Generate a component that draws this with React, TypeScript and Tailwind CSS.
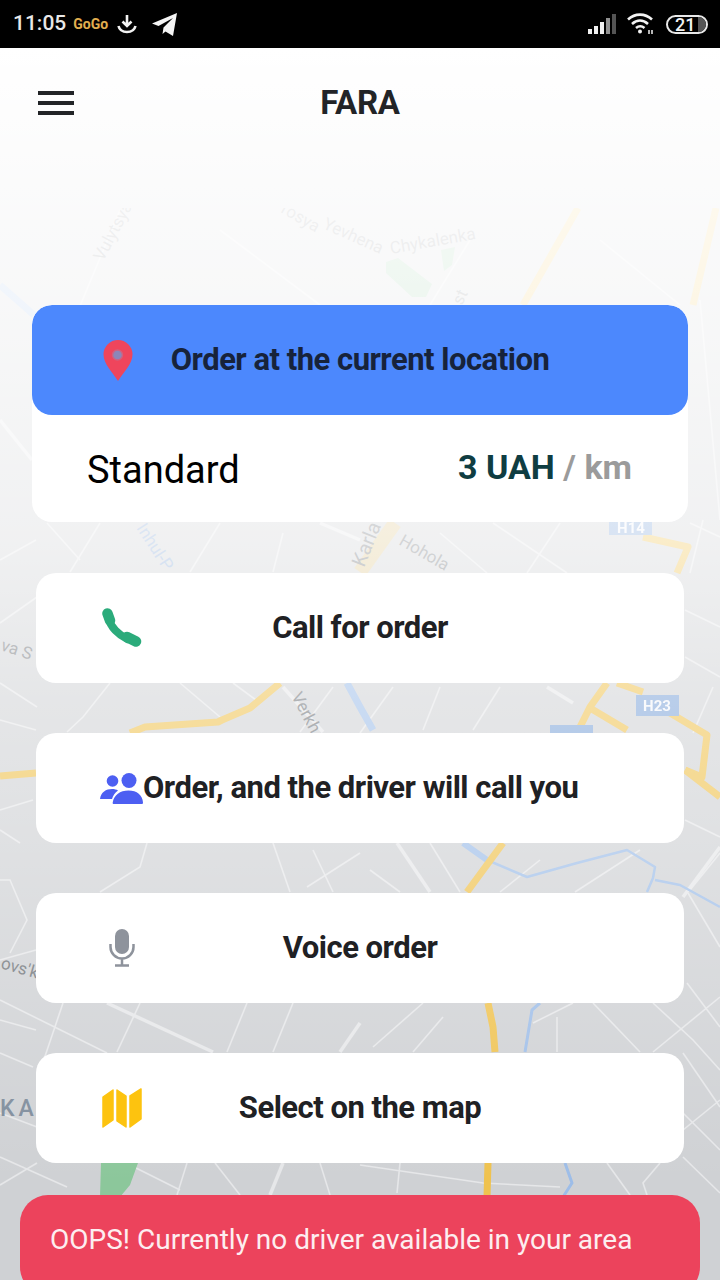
const ROADS: [string, number][] = [
  // lower left
  ['107,1003 213,1052', 4], ['63,1003 37,1080', 2], ['0,1000 107,1053', 2], ['140,1003 117,1052', 2],
  ['247,1003 227,1052', 2], ['293,1003 273,1052', 2], ['360,1023 340,1052', 4], ['0,1053 33,1067', 2],
  ['0,1113 37,1127', 2], ['0,1157 67,1187', 2], ['147,843 140,867 100,892', 2], ['273,843 290,892', 2],
  ['313,850 333,892', 2], ['360,853 307,887', 2], ['0,880 10,880 27,920 10,953', 2], ['283,1163 270,1195', 4],
  ['187,1163 177,1195', 2], ['37,1163 0,1185', 2], ['0,960 36,950', 2], ['36,1030 0,1020', 2],
  ['215,1163 240,1195', 2], ['320,1163 330,1195', 2], ['130,1165 180,1190', 2],
  // lower right
  ['397,843 430,892', 4], ['430,843 460,892', 2], ['370,870 400,892', 2], ['683,897 720,847', 4],
  ['688,893 720,947', 2], ['687,983 720,1027', 2], ['720,997 653,1052', 2], ['593,1003 640,1052', 2],
  ['653,1003 693,1040 720,1070', 2], ['573,1003 533,1023', 2], ['423,1003 373,1047', 2], ['443,1017 413,1052', 2],
  ['557,1017 557,1052', 2], ['683,1053 720,1107', 2], ['720,1100 683,1130', 2], ['683,1113 720,1150', 2],
  ['683,1157 720,1193', 2], ['660,1163 643,1183 647,1195', 2], ['360,1165 483,1183 560,1187', 2], ['400,1163 397,1193', 2],
  ['607,1163 630,1195', 2], ['500,892 540,860', 2], ['575,892 640,850', 2],
  // middle left
  ['47,523 80,560', 2], ['0,560 36,540', 2], ['0,623 37,597', 2], ['283,533 273,572', 2], ['320,523 360,540', 4],
  ['110,683 83,717 67,732', 2], ['180,683 220,717', 2], ['233,683 260,703', 2], ['283,687 323,732', 4],
  ['0,683 37,707', 2], ['0,720 36,730', 2], ['0,810 33,800', 2], ['20,843 0,830', 2], ['333,687 300,732', 2],
  ['100,523 70,572', 2], ['220,523 190,572', 2],
  // middle right
  ['393,687 360,733', 2], ['440,687 423,730', 2], ['500,687 473,730', 2], ['547,687 573,703', 4], ['560,523 527,573', 2],
  ['493,523 567,573', 2], ['440,533 487,573', 2], ['690,523 720,537', 2], ['703,520 690,573', 2], ['685,610 720,627', 2],
  ['685,657 720,677', 2], ['713,687 693,733', 2], ['685,820 720,837', 2], ['720,853 690,890', 2], ['700,300 720,520', 2],
  // faded top
  ['0,420 32,460', 3], ['120,210 70,330', 2], ['470,240 430,305', 2], ['600,240 680,305', 2], ['220,230 320,305', 2],
];

function MapBackdrop() {
  return (
    <svg className="absolute left-0 top-[48px] h-[1232px] w-[720px]" viewBox="0 48 720 1232" fill="none">
      <defs>
        <linearGradient id="fade" x1="0" y1="48" x2="0" y2="1280" gradientUnits="userSpaceOnUse">
          <stop offset="0" stopColor="#fff" stopOpacity="1" />
          <stop offset="0.13" stopColor="#fff" stopOpacity="0.9" />
          <stop offset="0.2" stopColor="#fff" stopOpacity="0.86" />
          <stop offset="0.4" stopColor="#fff" stopOpacity="0.7" />
          <stop offset="0.53" stopColor="#fff" stopOpacity="0.46" />
          <stop offset="0.66" stopColor="#fff" stopOpacity="0.33" />
          <stop offset="0.92" stopColor="#fff" stopOpacity="0" />
        </linearGradient>
        <clipPath id="mapArea">
          <rect x="0" y="208" width="720" height="1072" />
        </clipPath>
        <filter id="soft">
          <feGaussianBlur stdDeviation="0.6" />
        </filter>
      </defs>
      <rect x="0" y="48" width="720" height="1232" fill="#cfd1d4" />
      <g clipPath="url(#mapArea)">
        <g filter="url(#soft)">
          {ROADS.map(([points, width]) => (
            <polyline key={points} points={points} stroke="#e6e7e9" strokeWidth={width === 2 ? 1.6 : 3.5} />
          ))}
          {/* parks */}
          <path d="M101 1163h37l-8 22-10 12-20 0z" fill="#8cc79b" />
          <path d="M386 262l12-4 34 26-6 13-14 0-26-24z" fill="#8cc79b" />
          <path d="M441 250l14-3-3 18-8 6z" fill="#8cc79b" />
          {/* water */}
          <g stroke="#9dbde8" strokeLinejoin="round">
            <polyline points="0,285 34,315" strokeWidth="7" />
            <polyline points="347,683 360,707 373,730" strokeWidth="7" />
            <polyline points="463,843 487,860" strokeWidth="6" />
            <polyline points="487,860 527,877 577,863 627,850 655,867 653,878 647,892" strokeWidth="2.500" />
            <polyline points="655,880 680,885 720,907" strokeWidth="2.500" />
            <polyline points="540,1003 532,1010 525,1052" strokeWidth="3" />
            <polyline points="565,1163 572,1183 563,1197" strokeWidth="3" />
          </g>
          {/* highways */}
          <g stroke="#efc24f" strokeWidth="7" strokeLinejoin="round">
            <polyline points="0,776 36,773" />
            <polyline points="130,733 145,727 218,722 222,720 250,708 280,683" />
            <polyline points="578,208 523,305" />
            <polyline points="716,208 693,305" />
            <polyline points="643,537 688,547 677,573" />
            <polyline points="607,683 590,707 577,733" />
            <polyline points="617,683 643,692" />
            <polyline points="590,708 627,730" />
            <polyline points="670,713 707,735 702,777 685,770" />
            <polyline points="685,770 720,797" />
            <polyline points="503,843 467,892" />
            <polyline points="488,1003 493,1027 495,1052" />
            <polyline points="488,1163 487,1197" />
            <polyline points="360,572 395,523" strokeWidth="14" opacity="0.5" />
          </g>
          {/* shields */}
          <rect x="609" y="522" width="43" height="13" fill="#7ea4d8" />
          <rect x="636" y="695" width="43" height="21" fill="#7ea4d8" />
          <rect x="550" y="725" width="43" height="10" fill="#7ea4d8" />
          <g fontFamily="Roboto, sans-serif" fontWeight="700">
            <text x="657" y="711" fontSize="15" fill="#f4f6fa" textAnchor="middle">H23</text>
            <text x="631" y="533" fontSize="15" fill="#f4f6fa" textAnchor="middle">H14</text>
          </g>
        </g>
        {/* street names */}
        <g fontFamily="Roboto, sans-serif" fontSize="17" fill="#6f7479">
          <text transform="translate(103 262) rotate(-62)">Vulytsya</text>
          <text transform="translate(280 212) rotate(30)">rosya</text>
          <text transform="translate(322 228) rotate(24)">Yevhena</text>
          <text transform="translate(391 254) rotate(-10)">Chykalenka</text>
          <text transform="translate(462 306) rotate(-65)">st</text>
          <text transform="translate(364 568) rotate(-68)" fontSize="20">Karla</text>
          <text transform="translate(398 544) rotate(30)">Hohola</text>
          <text transform="translate(0 650) rotate(18)">va S</text>
          <text transform="translate(291 696) rotate(62)">Verkh</text>
          <text transform="translate(0 968) rotate(16)">ovs'k</text>
          <text x="0" y="1116" fontSize="23" fontWeight="500" letterSpacing="4" fill="#7c8a9a">KA</text>
          <text transform="translate(136 528) rotate(57)" fill="#88a9d8">Inhul-P</text>
        </g>
      </g>
      <rect x="0" y="48" width="720" height="1232" fill="url(#fade)" />
    </svg>
  );
}

function PinIcon() {
  return (
    <svg width="30" height="41" viewBox="0 0 30 41">
      <path d="M15 41C10 33 .5 24 .5 14.5a14.5 14.5 0 0 1 29 0C29.500 24 20 33 15 41z" fill="#ef455c" />
      <circle cx="14.500" cy="15" r="5" fill="#8d86b8" stroke="#d0617f" strokeWidth="1.500" />
    </svg>
  );
}

function PhoneIcon() {
  return (
    <svg width="40" height="40" viewBox="0 0 40 40" fill="none" stroke="#2bab7b" strokeLinecap="round">
      <path d="M6.500 10c2 9 10 17 19 21" strokeWidth="8" />
      <path d="M5.500 5.500l2.500 7" strokeWidth="10.500" />
      <path d="M25 29l9 4.500" strokeWidth="10.500" />
    </svg>
  );
}

function PeopleIcon() {
  return (
    <svg width="43" height="31" viewBox="0 0 43 31" fill="#4d5ff2">
      <circle cx="12.500" cy="8" r="5.800" />
      <circle cx="29" cy="7.500" r="7.500" />
      <path d="M0 26c1-7 6-10 12-10 2.500 0 4.500.5 6 1.500-3 2-5 5-6 8.500z" />
      <path d="M14 31c-1 0-1.500-.5-1.300-1.500C14 22 20 17.500 28.500 17.500S42.500 22 43 29.500c0 1-.5 1.500-1.500 1.500z" />
    </svg>
  );
}

function MicIcon() {
  return (
    <svg width="26" height="38" viewBox="0 0 26 38" fill="none">
      <rect x="6" y="0" width="14" height="25" rx="7" fill="#8e939c" />
      <path d="M1.500 15v3a11.500 11.500 0 0 0 23 0v-3M13 29.500V36M6 36.500h14" stroke="#8e939c" strokeWidth="2.500" />
    </svg>
  );
}

function MapIcon() {
  return (
    <svg width="40" height="40" viewBox="0 0 40 40" fill="#fdc30f" stroke="#fdc30f" strokeWidth="1.500" strokeLinejoin="round">
      <path d="M1 9l10-7v30l-10 7z" />
      <path d="M15 2l9 6v31l-9-6z" />
      <path d="M28 8l11-7v30l-11 8z" />
    </svg>
  );
}

function OptionRow({ icon, label }: { icon: React.ReactNode; label: string }) {
  return (
    <div className="grid h-[110px] grid-cols-[1fr_auto_1fr] items-center rounded-[20px] bg-white mx-1">
      <div className="pl-[64px]">
        <div className="flex w-[43px] items-center justify-center">{icon}</div>
      </div>
      <span className="text-[31px] font-bold tracking-[-0.5px] text-[#1f2124]">{label}</span>
      <div />
    </div>
  );
}

export default function App() {
  return (
    <div className="relative h-[1280px] w-[720px] overflow-hidden bg-white font-['Roboto',sans-serif]">
      <MapBackdrop />

      {/* status bar */}
      <div className="relative flex h-12 items-center justify-between bg-black pl-[13px] pr-3">
        <div className="flex items-center">
          <span className="text-[21px] font-medium text-[#e8e8e8]">11:05</span>
          <span className="ml-[7px] text-[14px] font-bold text-[#e2ae4f]">GoGo</span>
          <svg className="ml-[9px]" width="20" height="20" viewBox="0 0 20 20" fill="none" stroke="#f2f2f2" strokeWidth="2.600">
            <path d="M10 1v10M5.500 7.500L10 12l4.500-4.500" />
            <path d="M1.500 12c1 4 4.500 6 8.500 6s7.500-2 8.500-6" />
          </svg>
          <svg className="ml-[15px]" width="25" height="24" viewBox="0 0 25 24" fill="#f5f5f5">
            <path d="M25 1L21 24l-7.500-4.500-3 2.500 1-6.500L21 6 6.500 14 0 11.500z" />
          </svg>
        </div>
        <div className="flex items-center">
          <svg width="28" height="22" viewBox="0 0 28 22" fill="#f0f0f0">
            <rect x="0" y="16" width="4" height="5" />
            <rect x="6" y="13" width="4" height="8" />
            <rect x="12" y="9" width="4" height="12" />
            <rect x="18" y="5" width="4" height="16" opacity="0.6" />
            <rect x="24" y="1" width="4" height="20" opacity="0.35" />
          </svg>
          <svg className="ml-[11px]" width="28" height="24" viewBox="0 0 28 24" fill="none" stroke="#f2f2f2" strokeWidth="2.600">
            <path d="M1 7.500C8 1 18 1 25 7.500M5 12c5-4.500 11-4.500 16 0M9 16c3-2.500 5.500-2.500 8.500 0" />
            <circle cx="13" cy="19.500" r="2" fill="#f2f2f2" stroke="none" />
            <path d="M22 22v-4M25 22v-4" strokeWidth="1.500" />
          </svg>
          <div className="ml-[11px] flex h-[19px] w-[42px] items-center overflow-hidden rounded-full border-2 border-[#e8e8e8]">
            <span className="pl-[7px] pr-[3px] text-[18px] font-medium leading-[15px] text-[#f2f2f2]">21</span>
            <span className="h-full flex-1 bg-[#555]" />
          </div>
        </div>
      </div>

      {/* header */}
      <div className="relative grid h-[110px] grid-cols-[1fr_auto_1fr] items-center">
        <div className="flex flex-col gap-[6px] pl-[38px]">
          <span className="h-1 w-9 bg-[#222427]" />
          <span className="h-1 w-9 bg-[#222427]" />
          <span className="h-1 w-9 bg-[#222427]" />
        </div>
        <h1 className="text-[33px] font-bold tracking-[-0.3px] text-[#222427]">FARA</h1>
        <div />
      </div>

      <div className="relative mt-[147px] flex flex-col px-8">
        {/* current location card */}
        <div className="overflow-hidden rounded-[20px] bg-white">
          <div className="grid h-[110px] grid-cols-[1fr_auto_1fr] items-center rounded-[20px] bg-[#4c88fd]">
            <div className="pl-[71px]">
              <PinIcon />
            </div>
            <span className="text-[31px] font-bold tracking-[-0.5px] text-[#17233b]">Order at the current location</span>
            <div />
          </div>
          <div className="flex h-[107px] items-center justify-between pl-[55px] pr-14">
            <span className="pt-1 text-[38px] text-black">Standard</span>
            <span className="pb-[2px] text-[34px] font-bold text-[#0f3d42]">
              3 UAH <span className="text-[#9b9b9b]">/ km</span>
            </span>
          </div>
        </div>

        <div className="mt-[51px] flex flex-col gap-[50px]">
          <OptionRow icon={<PhoneIcon />} label="Call for order" />
          <OptionRow icon={<PeopleIcon />} label="Order, and the driver will call you" />
          <OptionRow icon={<MicIcon />} label="Voice order" />
          <OptionRow icon={<MapIcon />} label="Select on the map" />
        </div>
      </div>

      {/* no driver notice */}
      <div className="relative mx-5 mt-8 flex h-[100px] items-start rounded-[28px] bg-[#ec435c] pl-[30px] pt-[25px]">
        <span className="text-[28px] leading-[40px] text-[#fdeef0]">OOPS! Currently no driver available in your area</span>
      </div>
    </div>
  );
}
